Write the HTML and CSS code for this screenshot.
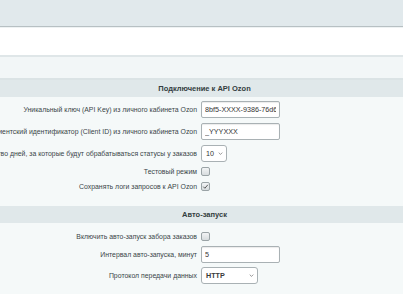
FILE: index.html
```html
<!DOCTYPE html>
<html lang="ru">
<head>
<meta charset="utf-8">
<link rel="stylesheet" href="styles.css">
</head>
<body>
<div class="topbar"></div>
<div class="whitebar"></div>
<div class="tabsbar"></div>
<div class="form">
  <div class="heading">Подключение к API Ozon</div>
  <div class="rows first">
    <div class="row">
      <div class="label"><span>Уникальный ключ (API Key) из личного кабинета Ozon</span></div>
      <div class="field"><input class="text" type="text" value="8bf5-XXXX-9386-76d6e8c7"></div>
    </div>
    <div class="row">
      <div class="label"><span>Клиентский идентификатор (Client ID) из личного кабинета Ozon</span></div>
      <div class="field"><input class="text" type="text" value="_YYYXXX"></div>
    </div>
    <div class="row">
      <div class="label"><span>Количество дней, за которые будут обрабатываться статусы у заказов</span></div>
      <div class="field"><div class="select s-small">10<svg viewBox="0 0 8 5" class="chev"><path d="M1 1l3 3 3-3" fill="none" stroke="#555" stroke-width="1"/></svg></div></div>
    </div>
    <div class="row check">
      <div class="label"><span>Тестовый режим</span></div>
      <div class="field"><span class="cb"></span></div>
    </div>
    <div class="row check">
      <div class="label"><span>Сохранять логи запросов к API Ozon</span></div>
      <div class="field"><span class="cb on"><svg viewBox="0 0 8 8"><path d="M1.5 4.2l1.8 1.8 3.4-4" fill="none" stroke="#555" stroke-width="1.1"/></svg></span></div>
    </div>
  </div>
  <div class="heading">Авто-запуск</div>
  <div class="rows second">
    <div class="row check">
      <div class="label"><span>Включить авто-запуск забора заказов</span></div>
      <div class="field"><span class="cb"></span></div>
    </div>
    <div class="row">
      <div class="label"><span>Интервал авто-запуска, минут</span></div>
      <div class="field"><input class="text" type="text" value="5"></div>
    </div>
    <div class="row">
      <div class="label"><span>Протокол передачи данных</span></div>
      <div class="field"><div class="select s-wide">HTTP<svg viewBox="0 0 8 5" class="chev"><path d="M1 1l3 3 3-3" fill="none" stroke="#555" stroke-width="1"/></svg></div></div>
    </div>
  </div>
</div>
</body>
</html>
```

FILE: styles.css
```css
html, body {
  margin: 0;
  padding: 0;
}
body {
  width: 403px;
  height: 294px;
  overflow: hidden;
  background: #f5f9f9;
  font-family: "Liberation Sans", Arial, sans-serif;
  font-size: 6.9px;
  color: #3f4b4f;
}
.topbar {
  height: 26px;
  background: #e1e9ec;
  border-bottom: 1px solid #b7c0c3;
}
.whitebar {
  height: 27px;
  background: #ffffff;
  border-top: 1px solid #eef2f3;
  border-bottom: 2px solid #dfe6e8;
}
.tabsbar {
  height: 21px;
  background: #f2f6f7;
  border-bottom: 2px solid #dbe3e5;
}
.form {
  display: flex;
  flex-direction: column;
}
.heading {
  height: 17px;
  line-height: 17px;
  background: #e0e8ea;
  text-align: center;
  font-weight: bold;
  font-size: 7.5px;
  color: #333d40;
  padding-left: 6px;
}
.rows {
  display: flex;
  flex-direction: column;
  gap: 4px;
}
.rows.first {
  padding: 3px 0 14px;
}
.rows.second {
  padding: 8px 0 10px;
  gap: 3px;
}
.row {
  display: flex;
  align-items: center;
  height: 18px;
}
.row.check {
  height: 11px;
}
.label {
  width: 197px;
  flex: none;
  display: flex;
  justify-content: flex-end;
  white-space: nowrap;
  padding-right: 4px;
  box-sizing: content-box;
  color: #3a4548;
}
.field {
  display: flex;
  align-items: center;
}
.text {
  box-sizing: border-box;
  width: 79px;
  height: 17px;
  border: 1px solid #a9b1b4;
  border-radius: 2px;
  background: #fff;
  font-family: "Liberation Sans", Arial, sans-serif;
  font-size: 7.2px;
  color: #333;
  padding: 0 3px;
  margin: 0;
  box-shadow: inset 0 1px 1px rgba(0,0,0,0.08);
}
.select {
  box-sizing: border-box;
  height: 17px;
  border: 1px solid #a9b1b4;
  border-radius: 3px;
  background: #fff;
  display: flex;
  align-items: center;
  justify-content: space-between;
  padding: 0 3px 0 4px;
  color: #333;
  font-size: 7.2px;
}
.s-small {
  width: 26px;
}
.s-wide {
  width: 57px;
  font-weight: bold;
  color: #3a3a3a;
}
.chev {
  width: 5px;
  height: 3px;
}
.cb {
  box-sizing: border-box;
  width: 9px;
  height: 9px;
  border: 1px solid #9aa3a6;
  border-radius: 2px;
  background: linear-gradient(#f2f4f5, #d7dcde);
  display: flex;
  align-items: center;
  justify-content: center;
}
.cb svg {
  width: 7px;
  height: 7px;
}
```
